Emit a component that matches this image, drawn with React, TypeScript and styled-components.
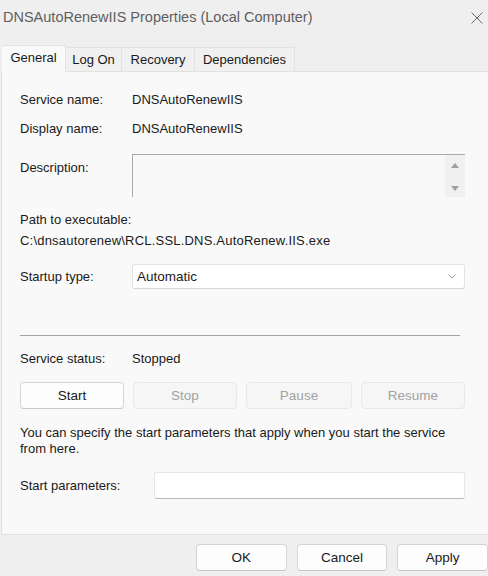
import React from "react";
import styled, { createGlobalStyle } from "styled-components";

const Global = createGlobalStyle`
  html, body { margin: 0; padding: 0; background: #efefef; }
  body { font-family: "Liberation Sans", Arial, sans-serif; font-size: 13px; color: #1a1a1a; }
  * { box-sizing: border-box; }
`;

const Window = styled.div`
  width: 488px;
  height: 576px;
  overflow: hidden;
  background: #efefef;
  display: flex;
  flex-direction: column;
`;

const TitleBar = styled.div`
  height: 34px;
  display: flex;
  align-items: center;
  justify-content: space-between;
  padding: 0 4px 0 3px;
`;

const Title = styled.span`
  font-size: 14.5px;
  color: #5e5e5e;
  line-height: 18px;
`;

const CloseBtn = styled.span`
  display: flex;
  width: 14px;
  height: 14px;
  margin-top: 1px;
`;

const TabStrip = styled.div`
  margin-top: 11px;
  height: 27px;
  display: flex;
  align-items: flex-end;
  padding-left: 1px;
  position: relative;
  z-index: 1;
  margin-bottom: -1px;
`;

const Tab = styled.div<{ $active?: boolean; $w: number }>`
  width: ${(p) => p.$w}px;
  height: ${(p) => (p.$active ? 27 : 25)}px;
  display: flex;
  justify-content: center;
  align-items: flex-start;
  padding-top: ${(p) => (p.$active ? 4 : 4)}px;
  line-height: 16px;
  background: ${(p) => (p.$active ? "#f9f9f9" : "#f0f0f0")};
  border: 1px solid #e2e2e2;
  border-bottom: ${(p) => (p.$active ? "none" : "1px solid #e2e2e2")};
  border-left-color: ${(p) => (p.$active ? "#ececec" : "#e2e2e2")};
  color: #1a1a1a;
  & + & { margin-left: -1px; }
`;

const Panel = styled.div`
  margin-left: 1px;
  width: 492px;
  height: 464px;
  background: #f9f9f9;
  border: 1px solid #e2e2e2;
  border-right: none;
  padding: 0 0 0 18px;
  display: flex;
  flex-direction: column;
`;

const Content = styled.div`
  width: 445px;
  display: flex;
  flex-direction: column;
`;

const Row = styled.div<{ $mt: number; $align?: string }>`
  margin-top: ${(p) => p.$mt}px;
  display: grid;
  grid-template-columns: 112px 1fr;
  align-items: ${(p) => p.$align || "center"};
  line-height: 16px;
`;

const ParamRow = styled(Row)`
  grid-template-columns: 134px 1fr;
`;

const Label = styled.span<{ $pt?: number }>`
  padding-top: ${(p) => p.$pt || 0}px;
`;

const Text = styled.div<{ $mt: number; $wide?: boolean }>`
  margin-top: ${(p) => p.$mt}px;
  line-height: 16px;
  letter-spacing: ${(p) => (p.$wide ? "0.2px" : "0")};
`;

const DescBox = styled.div`
  height: 43px;
  border-top: 1px solid #a9a9a9;
  border-left: 1px solid #a9a9a9;
  background: #f9f9f9;
  display: flex;
  justify-content: flex-end;
`;

const ScrollTrack = styled.div`
  width: 20px;
  background: #f0f0f0;
  display: flex;
  flex-direction: column;
  align-items: center;
  justify-content: space-between;
  padding: 8px 0 6px;
`;

const Select = styled.div`
  height: 25px;
  background: #ffffff;
  border: 1px solid #e3e3e3;
  border-bottom-color: #d6d6d6;
  border-radius: 3px;
  display: flex;
  align-items: center;
  justify-content: space-between;
  padding: 0 8px 0 4px;
  font-size: 13.5px;
`;

const Separator = styled.div`
  margin-top: 46px;
  width: 440px;
  height: 1px;
  background: #a3a3a3;
`;

const ButtonRow = styled.div`
  margin-top: 15px;
  display: flex;
  gap: 9px;
`;

const Btn = styled.div<{ $disabled?: boolean; $w: number }>`
  width: ${(p) => p.$w}px;
  height: 27px;
  display: flex;
  align-items: center;
  justify-content: center;
  border-radius: 4px;
  background: ${(p) => (p.$disabled ? "#f6f6f6" : "#fdfdfd")};
  border: 1px solid ${(p) => (p.$disabled ? "#e8e8e8" : "#d5d5d5")};
  border-bottom-color: ${(p) => (p.$disabled ? "#e8e8e8" : "#c6c6c6")};
  color: ${(p) => (p.$disabled ? "#a2a2a2" : "#1a1a1a")};
  font-size: 13.5px;
`;

const Input = styled.div`
  height: 27px;
  background: #ffffff;
  border: 1px solid #e6e6e6;
  border-bottom-color: #b9b9b9;
  border-radius: 3px;
`;

const Footer = styled.div`
  margin-top: 9px;
  display: flex;
  gap: 10px;
  padding-left: 196px;
`;

const Chevron = () => (
  <svg width="8" height="5" viewBox="0 0 8 5">
    <path d="M0.5 0.5 L4 4 L7.5 0.5" fill="none" stroke="#9a9a9a" strokeWidth="1" />
  </svg>
);

const Arrow = ({ up }: { up?: boolean }) => (
  <svg width="8" height="5" viewBox="0 0 8 5">
    <path d={up ? "M0 5 L4 0 L8 5 Z" : "M0 0 L4 5 L8 0 Z"} fill="#a0a0a0" />
  </svg>
);

export default function App() {
  return (
    <>
      <Global />
      <Window>
        <TitleBar>
          <Title>DNSAutoRenewIIS Properties (Local Computer)</Title>
          <CloseBtn>
            <svg width="14" height="14" viewBox="0 0 14 14">
              <path d="M1.5 1.5 L12.5 12.5 M12.5 1.5 L1.5 12.5" stroke="#6a6a6a" strokeWidth="1" />
            </svg>
          </CloseBtn>
        </TitleBar>
        <TabStrip>
          <Tab $active $w={65}>General</Tab>
          <Tab $w={57}>Log On</Tab>
          <Tab $w={74}>Recovery</Tab>
          <Tab $w={101}>Dependencies</Tab>
        </TabStrip>
        <Panel>
          <Content>
            <Row $mt={20}>
              <Label>Service name:</Label>
              <span>DNSAutoRenewIIS</span>
            </Row>
            <Row $mt={13}>
              <Label>Display name:</Label>
              <span>DNSAutoRenewIIS</span>
            </Row>
            <Row $mt={17} $align="start">
              <Label $pt={6}>Description:</Label>
              <DescBox>
                <ScrollTrack>
                  <Arrow up />
                  <Arrow />
                </ScrollTrack>
              </DescBox>
            </Row>
            <Text $mt={15}>Path to executable:</Text>
            <Text $mt={5} $wide>C:\dnsautorenew\RCL.SSL.DNS.AutoRenew.IIS.exe</Text>
            <Row $mt={15}>
              <Label>Startup type:</Label>
              <Select>
                <span>Automatic</span>
                <Chevron />
              </Select>
            </Row>
            <Separator />
            <Row $mt={15}>
              <Label>Service status:</Label>
              <span>Stopped</span>
            </Row>
            <ButtonRow>
              <Btn $w={104}>Start</Btn>
              <Btn $w={104} $disabled>Stop</Btn>
              <Btn $w={106} $disabled>Pause</Btn>
              <Btn $w={104} $disabled>Resume</Btn>
            </ButtonRow>
            <Text $mt={16}>
              You can specify the start parameters that apply when you start the service
              <br />
              from here.
            </Text>
            <ParamRow $mt={15}>
              <Label>Start parameters:</Label>
              <Input />
            </ParamRow>
          </Content>
        </Panel>
        <Footer>
          <Btn $w={92}>OK</Btn>
          <Btn $w={92}>Cancel</Btn>
          <Btn $w={92}>Apply</Btn>
        </Footer>
      </Window>
    </>
  );
}
